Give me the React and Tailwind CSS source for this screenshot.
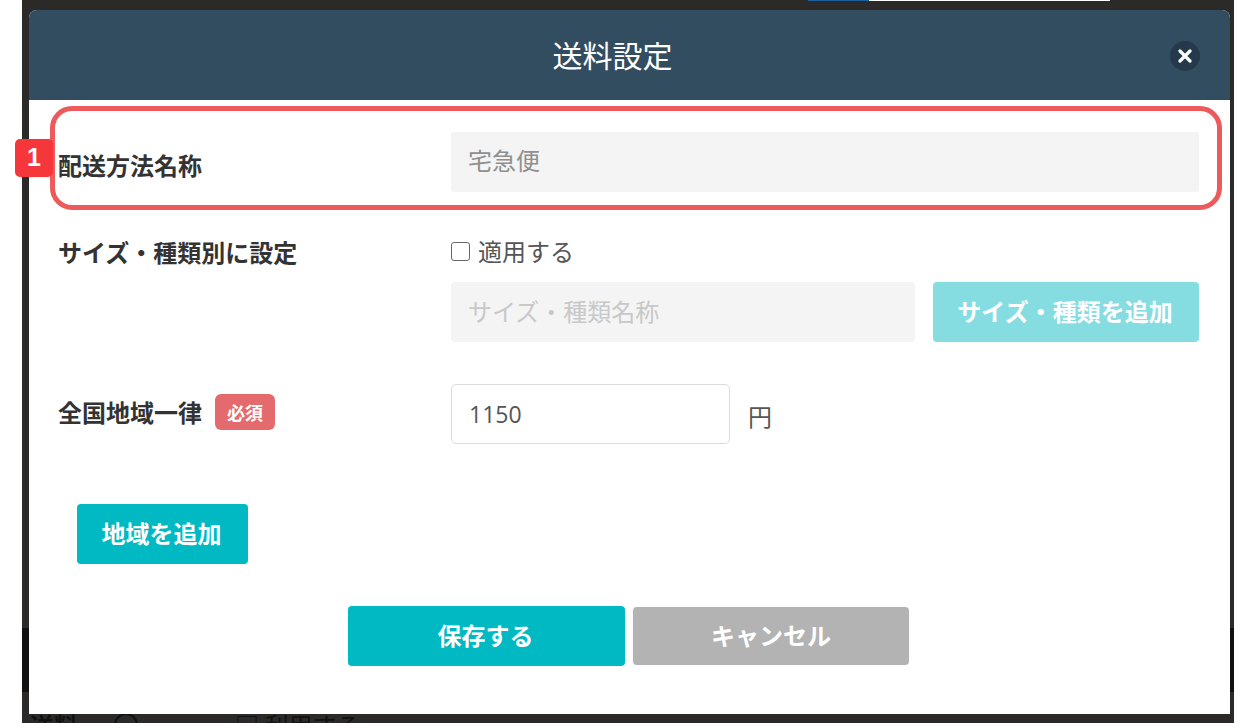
const font = { fontFamily: '"Noto Sans CJK JP", "Noto Sans", sans-serif' };

function Row({ label, badge, labelClass, children, className }) {
  return (
    <div className={`flex ${className}`}>
      <div className={`w-[393px] shrink-0 flex items-center gap-[13px] text-[24px] leading-[36px] font-bold text-[#333333] ${labelClass}`}>
        <span>{label}</span>
        {badge}
      </div>
      {children}
    </div>
  );
}

export default function App() {
  return (
    <div className="w-[1242px] h-[728px] bg-white overflow-hidden" style={font}>
      <div className="relative ml-[22px] w-[1212px] h-[723px] bg-[#2b2a28] overflow-hidden">
        <div className="absolute left-[786px] top-0 w-[61px] h-px bg-[#1c5f9e]" />
        <div className="absolute left-[847px] top-0 w-[241px] h-px bg-white" />
        <div className="absolute left-0 right-0 top-[628px] h-[64px] bg-[#121212]" />
        <div className="absolute left-[8px] top-[707px] flex items-center text-[24px] leading-[36px] text-[#111111] whitespace-nowrap">
          <span className="font-bold">送料</span>
          <span className="ml-[36px] w-[24px] h-[24px] rounded-full border-2 border-[#111111]" />
          <span className="ml-[97px]">□ 利用する</span>
        </div>

        <div className="absolute left-[7px] top-[10px] w-[1201px] h-[704px] bg-white rounded-t-[8px] flex flex-col overflow-hidden">
          <header className="relative h-[90px] shrink-0 bg-[#324d5f] flex items-center justify-center text-white text-[30px] leading-none pb-[2px] pr-[34px]">
            送料設定
            <button className="absolute left-[1141px] top-[31px] w-[30px] h-[30px] rounded-full bg-[#25394a] flex items-center justify-center">
              <svg width="14" height="14" viewBox="0 0 14 14">
                <path d="M2 2 L12 12 M12 2 L2 12" stroke="#ffffff" strokeWidth="3.2" strokeLinecap="round" />
              </svg>
            </button>
          </header>

          <div className="pl-[29px] pr-[31px] pt-[32px] flex flex-col flex-1">
            <Row label="配送方法名称" labelClass="h-[66px]">
              <div className="flex-1 h-[60px] bg-[#f4f4f4] rounded-[3px] flex items-center pl-[17px] pb-[4px] text-[24px] text-[#8f8f8f]">
                宅急便
              </div>
            </Row>

            <Row label="サイズ・種類別に設定" labelClass="h-[36px] self-start" className="mt-[36px]">
              <div className="flex-1 flex flex-col">
                <label className="h-[36px] flex items-center pb-[2px] text-[24px] text-[#555555]">
                  <span className="w-[19px] h-[19px] rounded-[3px] border-[1.5px] border-[#666666] bg-white mr-[8px]" />
                  適用する
                </label>
                <div className="flex mt-[12px] gap-[18px]">
                  <div className="w-[464px] h-[60px] bg-[#f4f4f4] rounded-[4px] flex items-center pl-[17px] pb-[2px] text-[24px] text-[#c8c8c8]">
                    サイズ・種類名称
                  </div>
                  <button className="flex-1 h-[60px] rounded-[4px] bg-[#85dde2] text-white text-[24px] font-bold pb-[2px] pr-[2px]">
                    サイズ・種類を追加
                  </button>
                </div>
              </div>
            </Row>

            <Row
              label="全国地域一律"
              labelClass="h-[56px] self-start"
              className="mt-[42px]"
              badge={
                <span className="w-[60px] h-[36px] rounded-[6px] bg-[#e46a6d] text-white text-[18px] flex items-center justify-center">
                  必須
                </span>
              }
            >
              <div className="flex-1 flex items-center">
                <div className="w-[279px] h-[60px] bg-white border-[1.5px] border-[#dddddd] rounded-[5px] flex items-center pl-[17px] text-[23px] text-[#555555]" style={{ fontFamily: '"Open Sans", sans-serif' }}>
                  1150
                </div>
                <span className="ml-[18px] mt-[4px] text-[24px] text-[#555555]">円</span>
              </div>
            </Row>

            <button className="ml-[19px] mt-[60px] w-[171px] h-[60px] rounded-[4px] bg-[#00b9c3] text-white text-[24px] font-bold shrink-0 pb-[2px] pr-[2px]">
              地域を追加
            </button>

            <div className="flex mt-[42px] pl-[290px] gap-[8px] items-center">
              <button className="w-[277px] h-[60px] rounded-[4px] bg-[#00b9c3] text-white text-[24px] font-bold pb-[2px] pr-[2px]">
                保存する
              </button>
              <button className="w-[276px] h-[58px] rounded-[4px] bg-[#b3b3b3] text-white text-[24px] font-bold pb-[2px]">
                キャンセル
              </button>
            </div>
          </div>
        </div>
      </div>

      <div className="absolute left-[50px] top-[106px] w-[1172px] h-[104px] rounded-[22px] border-[5px] border-[#ec5a5c] pointer-events-none" />
      <div className="absolute left-[15px] top-[139px] w-[38px] h-[38px] rounded-[5px] bg-[#f5363a] text-white text-[25px] font-bold flex items-center justify-center" style={{ fontFamily: '"Liberation Sans", sans-serif' }}>
        1
      </div>
    </div>
  );
}
